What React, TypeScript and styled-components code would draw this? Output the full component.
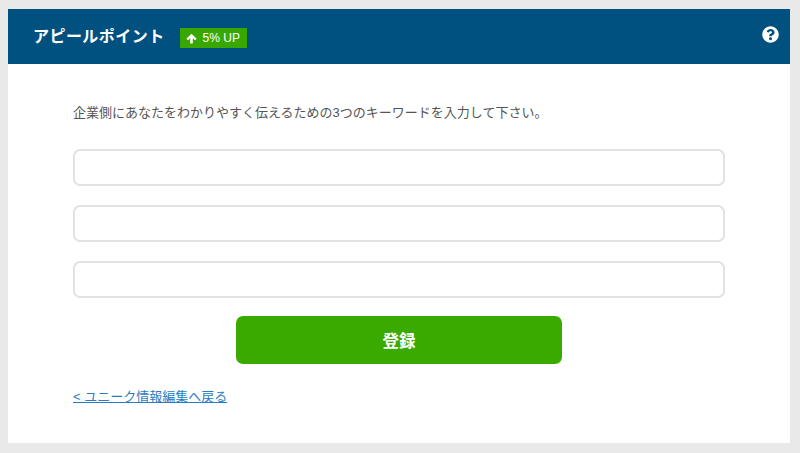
import React, { FC } from 'react'
import styled, { createGlobalStyle } from 'styled-components'
import { FaQuestionCircle } from 'react-icons/fa'

const GlobalStyle = createGlobalStyle`
  html, body {
    margin: 0;
    padding: 0;
    background-color: #e9e9e9;
  }
  * {
    box-sizing: border-box;
  }
`

const Page = styled.div`
  width: 800px;
  height: 453px;
  padding: 9px 10px 10px 8px;
  font-family: "Liberation Sans", "Noto Sans CJK JP", sans-serif;
`

const Panel = styled.section`
  height: 100%;
  background-color: white;
`

const Header = styled.header`
  height: 55px;
  padding: 0 11px 0 25px;
  display: flex;
  align-items: flex-start;
  background-color: #00517f;
  color: white;
`

const Title = styled.h1`
  margin: 16px 0 0;
  font-size: 16px;
  line-height: 24px;
  font-weight: 700;
  letter-spacing: 0.45px;
`

const Badge = styled.span`
  margin: 19px 0 0 15px;
  width: 67px;
  height: 20px;
  padding-left: 6px;
  display: flex;
  align-items: center;
  gap: 6px;
  background-color: #38a800;
  font-size: 12px;

  svg {
    width: 11px;
    height: 11px;
  }
`

const HelpButton = styled.span`
  margin: 17px 0 0 auto;
  display: flex;
  font-size: 17px;
`

const Body = styled.div`
  padding: 40px 65px 0;
  display: flex;
  flex-direction: column;
`

const Lead = styled.p`
  margin: 0 0 27px;
  font-size: 13px;
  line-height: 18px;
  color: #555;
`

const Fields = styled.div`
  display: flex;
  flex-direction: column;
  gap: 19px;
`

const KeywordInput = styled.input`
  width: 652px;
  height: 37px;
  border: 2px solid #e2e2e2;
  border-radius: 7px;
  background-color: white;
  outline: none;
`

const SubmitButton = styled.button`
  align-self: flex-start;
  margin: 18px 0 0 163px;
  width: 326px;
  height: 48px;
  border: none;
  border-radius: 7px;
  background-color: #3aaa00;
  color: white;
  font-family: inherit;
  font-size: 16.5px;
  font-weight: 700;
`

const BackLink = styled.a`
  margin-top: 24px;
  align-self: flex-start;
  font-size: 13px;
  line-height: 18px;
  color: #2a7cc4;
  text-decoration: underline;
`

const UpArrow: FC = () => (
  <svg viewBox="0 0 12 12" fill="white">
    <path d="M6 .8 11.6 6.4 9.8 8 7.4 5.7V11.4H4.6V5.7L2.2 8 .4 6.4Z" />
  </svg>
)

const App: FC = () => {
  const fields = [0, 1, 2]

  return (
    <Page>
      <GlobalStyle />
      <Panel>
        <Header>
          <Title>アピールポイント</Title>
          <Badge>
            <UpArrow />
            5% UP
          </Badge>
          <HelpButton>
            <FaQuestionCircle />
          </HelpButton>
        </Header>
        <Body>
          <Lead>企業側にあなたをわかりやすく伝えるための3つのキーワードを入力して下さい。</Lead>
          <Fields>
            {fields.map(i => (
              <KeywordInput key={`keyword-${i}`} type="text" />
            ))}
          </Fields>
          <SubmitButton type="button">登録</SubmitButton>
          <BackLink href="#back">&lt; ユニーク情報編集へ戻る</BackLink>
        </Body>
      </Panel>
    </Page>
  )
}

export default App
